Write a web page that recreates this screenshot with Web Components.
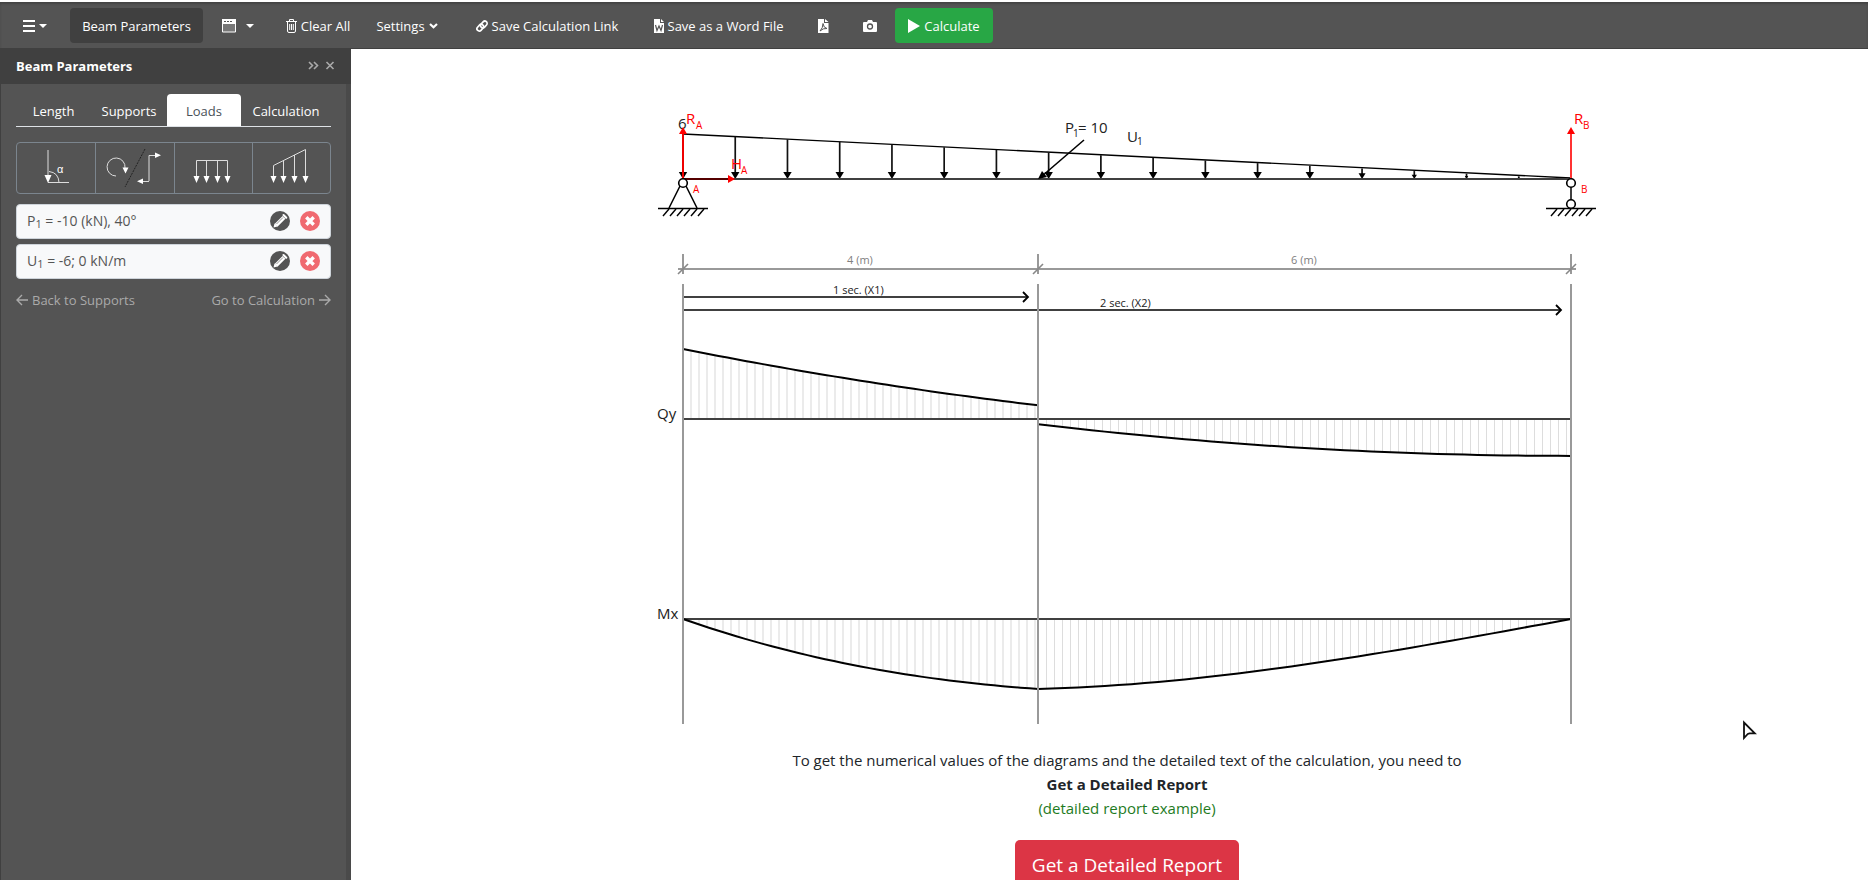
<!DOCTYPE html>
<html lang="en">
<head>
<meta charset="utf-8">
<title>Beam Calculator</title>
<style>
html,body{margin:0;height:100%}
body{overflow:hidden;background:#fff;color:#212529;font:13px/20px "Open Sans","Noto Sans",sans-serif}
</style>
</head>
<body>
<beam-app></beam-app>

<template id="t-app">
<style>
:host{display:flex;flex-direction:column;height:100vh;padding-top:2px;box-sizing:border-box}
.body{display:flex;flex:1;min-height:0}
main{flex:1;min-width:0;overflow:hidden;padding:51px 0 0 35px;display:flex;flex-direction:column;align-items:center}
beam-diagram{flex:none;width:940px;max-width:100%}
.pointer{position:absolute;left:1742px;top:720px}
</style>
<top-bar></top-bar>
<div class="body">
  <side-panel></side-panel>
  <main>
    <beam-diagram></beam-diagram>
    <report-prompt></report-prompt>
  </main>
</div>
<svg class="pointer" width="16" height="21" viewBox="0 0 16 21" aria-hidden="true"><path d="M2 2.500V18L5.800 14L7.500 13.300H12.800Z" fill="#fff" stroke="#111" stroke-width="1.800"/></svg>
</template>

<template id="t-bar">
<style>
:host{display:block;flex:none;background:#545454;border-bottom:1px solid #404040;box-shadow:inset 0 2px 2px #444}
nav{display:flex;align-items:center;height:46px;padding:1px 0 0 10px;box-sizing:border-box}
</style>
<nav aria-label="Tools">
  <bar-button style="--w:50px;--e:10px" label="Menu"><svg width="24" height="14" viewBox="0 0 24 14"><path d="M0 2h12M0 7h12M0 12h12" stroke="#fff" stroke-width="2"/><path d="M16 5h8l-4 4z" fill="#fff"/></svg></bar-button>
  <bar-button style="--w:133px;--bg:#404040">Beam Parameters</bar-button>
  <bar-button style="--w:69px" label="Windows"><svg width="32" height="14" viewBox="0 0 32 14"><path d="M.5 1h13v12H.5z" fill="#777" stroke="#fff"/><path d="M0 0h14v5H0z" fill="#fff"/><path d="M2 2h2v1H2zm3 0h2v1H5zm3 0h2v1H8z" fill="#555"/><path d="M24 5h8l-4 4z" fill="#fff"/></svg></bar-button>
  <bar-button style="--w:92px"><svg width="11" height="14" viewBox="0 0 11 14" fill="none" stroke="#fff"><path d="M0 2.500h11M3.500 2V.5h4V2M1.500 3v9q0 1.500 1.500 1.500h5q1.500 0 1.500-1.500V3M3.700 5v6M5.500 5v6M7.300 5v6"/></svg>Clear All</bar-button>
  <bar-button style="--w:86px">Settings<svg width="9" height="6" viewBox="0 0 9 6"><path d="M1 1l3.500 3.300L8 1" fill="none" stroke="#fff" stroke-width="2.200"/></svg></bar-button>
  <bar-button style="--w:194px"><svg width="12" height="12" viewBox="0 0 12 12" fill="none" stroke="#fff" stroke-width="1.700"><rect x="4" y="2.200" width="7.500" height="4.600" rx="2.300" transform="rotate(-48 7.800 4.400)"/><rect x=".4" y="5.400" width="7.500" height="4.600" rx="2.300" transform="rotate(-48 4.200 7.600)"/></svg>Save Calculation Link</bar-button>
  <bar-button style="--w:149px"><svg width="10" height="14" viewBox="0 0 10 14"><path d="M0 0h6v4h4v10H0zM7 0l3 3H7z" fill="#fff"/><path d="M1.500 6l1.500 5.500L5 7l2 4.500L8.500 6" fill="none" stroke="#545454" stroke-width="1.200"/></svg>Save as a Word File</bar-button>
  <bar-button style="--w:61px" label="Save as PDF"><svg width="11" height="14" viewBox="0 0 11 14"><path d="M0 0h6v4h4.500v10H0zM7 0l3.500 3H7z" fill="#fff"/><path d="M2 12q3-3 3-7.500Q5.500 9 9 9.500 5 9 2 12" fill="none" stroke="#545454"/></svg></bar-button>
  <bar-button style="--w:31px" label="Screenshot"><svg width="14" height="12" viewBox="0 0 14 12"><path d="M1 2h3l1-2h4l1 2h3q1 0 1 1v8q0 1-1 1H1q-1 0-1-1V3q0-1 1-1z" fill="#fff"/><circle cx="7" cy="6.500" r="2.500" fill="none" stroke="#545454" stroke-width="1.300"/></svg></bar-button>
  <bar-button style="--w:98px;--bg:#28a745;--m:10px"><svg width="12" height="14" viewBox="0 0 12 14"><path d="M0 0l12 7L0 14z" fill="#fff"/></svg>Calculate</bar-button>
</nav>
</template>

<template id="t-bb">
<style>
:host{display:block;flex:none;min-width:var(--w);margin-left:var(--m,0);margin-right:var(--e,0)}
button{display:flex;align-items:center;justify-content:center;gap:4px;width:100%;height:35px;padding:0;border:0;border-radius:4px;background:var(--bg,transparent);color:#fff;font:inherit;white-space:nowrap}
</style>
<button type="button"><slot></slot></button>
</template>

<template id="t-side">
<style>
:host{display:flex;flex-direction:column;flex:none;width:351px;background:#545454;box-sizing:border-box;border-right:5px solid #4a4a4a;border-left:1px solid #404040}
header{display:flex;align-items:center;gap:6px;height:35px;flex:none;box-sizing:border-box;padding:0 16px 2px 15px;margin:0 -5px 0 -1px;background:#404040;color:#fff}
h2{flex:1;margin:0;font-size:13px;line-height:20px;padding-left:1px}
header button{display:flex;border:0;padding:0;background:none}
.content{padding:10px 15px 0}
[role=tablist]{display:grid;grid-template-columns:75px 76px 74px 1fr;border-bottom:1px solid #dee2e6;height:32px}
[role=tab]{border:0;border-radius:4px 4px 0 0;background:none;color:#fff;font:inherit;padding:2px 0 0;height:32px}
[role=tab][aria-selected=true]{background:#fff;color:#495057}
.loads{display:grid;grid-template-columns:repeat(4,1fr);height:52px;box-sizing:border-box;border:1px solid #7b858e;border-radius:4px;margin:15px 0 10px}
.loads button{display:flex;align-items:center;justify-content:center;border:0;border-left:1px solid #7b858e;background:none;padding:0}
.loads button:first-child{border-left:0}
.loads svg{fill:none;stroke:#ddd}
.loads svg [f]{fill:#fff;stroke:none}
load-row{margin-bottom:5px}
footer{display:flex;justify-content:space-between;margin-top:11px}
a{display:flex;align-items:center;gap:4px;color:#aaa;text-decoration:none}
a svg{fill:none;stroke:#aaa;stroke-width:1.400}
</style>
<header><h2>Beam Parameters</h2>
  <button type="button" aria-label="Collapse"><svg width="11" height="9" viewBox="0 0 11 9"><path d="M1 1l3.500 3.500L1 8M6 1l3.500 3.500L6 8" fill="none" stroke="#aaa" stroke-width="1.600"/></svg></button>
  <button type="button" aria-label="Close"><svg width="10" height="9" viewBox="0 0 10 9"><path d="M1.500 1l7 7M8.500 1l-7 7" fill="none" stroke="#aaa" stroke-width="1.600"/></svg></button>
</header>
<div class="content">
  <div role="tablist">
    <button role="tab">Length</button><button role="tab">Supports</button><button role="tab" aria-selected="true">Loads</button><button role="tab">Calculation</button>
  </div>
  <div class="loads">
    <button type="button" aria-label="Force"><svg width="68" height="46" viewBox="0 0 68 46"><path d="M26 5v28M26 37.500h21M27 26.500q9.500 1 10 11"/><path f d="M22.500 30h7L26 38z"/><text f x="35" y="28" font-size="11">α</text></svg></button>
    <button type="button" aria-label="Moment"><svg width="68" height="46" viewBox="0 0 68 46"><path d="M15 31A9 9 0 1 1 24 23M48 36V10.500h6M48 36.500H41"/><path d="M44 4L24 42" stroke="#222" stroke-dasharray="2 1"/><path f d="M21.500 22.500h6l-3 6zM54 7.500l6 2.700-6 2.800zM42 33.500l-6 2.800 6 2.700z"/></svg></button>
    <button type="button" aria-label="Uniform load"><svg width="68" height="46" viewBox="0 0 68 46"><path d="M17.500 34V15.500h31V34M27.500 15v19M38.500 15v19"/><path f d="M14.500 31h6l-3 7zM24.500 31h6l-3 7zM35.500 31h6l-3 7zM45.500 31h6l-3 7z"/></svg></button>
    <button type="button" aria-label="Trapezoidal load"><svg width="68" height="46" viewBox="0 0 68 46"><path d="M16.500 34V20.500l32-16V34M26.500 16v18M37.500 10v24"/><path f d="M13.500 31h6l-3 7zM23.500 31h6l-3 7zM34.500 31h6l-3 7zM45.500 31h6l-3 7z"/></svg></button>
  </div>
  <load-row>P<sub>1</sub> = -10 (kN), 40°</load-row>
  <load-row>U<sub>1</sub> = -6; 0 kN/m</load-row>
  <footer>
    <a href="#supports"><svg width="12" height="12" viewBox="0 0 12 12"><path d="M12 6H1M6 1L1 6l5 5"/></svg>Back to Supports</a>
    <a href="#calculation">Go to Calculation<svg width="12" height="12" viewBox="0 0 12 12"><path d="M0 6h11M6 1l5 5-5 5"/></svg></a>
  </footer>
</div>
</template>

<template id="t-row">
<style>
:host{display:flex;align-items:center;gap:10px;height:35px;box-sizing:border-box;padding:0 10px 2px;border:1px solid #ced4da;border-radius:4px;background:#f8f9fa;color:#555;font-size:14px}
.t{flex:1}
::slotted(sub){font-size:11px;line-height:0;vertical-align:-2px}
button{display:flex;border:0;padding:0;background:none}
</style>
<span class="t"><slot></slot></span>
<button type="button" aria-label="Edit"><svg width="20" height="20" viewBox="0 0 20 20"><circle cx="10" cy="10" r="10" fill="#545454"/><path d="M6 14.300L14 6.300" stroke="#fff" stroke-width="4"/><path d="M3.500 16.500l1-4 3 3z" fill="#fff"/><path d="M13.500 4l2.800 2.800" stroke="#fff" stroke-width="2" stroke-linecap="round"/><path d="M6.500 13l6.500-6.500" stroke="#777" stroke-width=".8"/></svg></button>
<button type="button" aria-label="Delete"><svg width="20" height="20" viewBox="0 0 20 20"><circle cx="10" cy="10" r="10" fill="#f06a70"/><path d="M6.300 6.300l7.400 7.400M13.700 6.300l-7.400 7.400" stroke="#fff" stroke-width="3.400"/></svg></button>
</template>

<template id="t-diagram">
<style>
:host{display:block}
svg{display:block;width:100%;height:auto}
text{font:15px "Open Sans","Noto Sans",sans-serif;fill:#222}
.s{font-size:10px}
.d{font-size:11px;fill:#808080}
.x{font-size:11px}
.r{fill:#f00}
</style>
<svg viewBox="657 100 940 634" role="img" aria-label="Beam scheme with shear force and bending moment diagrams"></svg>
</template>

<template id="t-prompt">
<style>
:host{display:block;flex:none;margin-top:14px;text-align:center;font-size:15px;line-height:24px}
p{margin:0}
a{color:#1e7b1e;text-decoration:none}
button{margin-top:20px;width:224px;height:50px;border:0;border-radius:5px;background:#dc3545;color:#fff;font:19px/28px "Open Sans","Noto Sans",sans-serif}
</style>
<p>To get the numerical values of the diagrams and the detailed text of the calculation, you need to</p>
<p><b>Get a Detailed Report</b></p>
<p><a href="#example">(detailed report example)</a></p>
<button type="button">Get a Detailed Report</button>
</template>

<script>
const define = (name, id, init) => customElements.define(name, class extends HTMLElement {
  constructor() {
    super();
    this.attachShadow({ mode: 'open' }).append(document.getElementById(id).content.cloneNode(true));
  }
  connectedCallback() { if (init) init(this, this.shadowRoot); }
});

const line = (x1, y1, x2, y2, color = '#000', w = 2) =>
  `<path d="M${x1} ${y1}L${x2} ${y2}" stroke="${color}" stroke-width="${w}" fill="none"/>`;
const poly = (points, color = '#000') => `<path d="M${points}Z" fill="${color}"/>`;
const text = (x, y, s, cls = '') => `<text x="${x}" y="${y}" class="${cls}">${s}</text>`;

function drawBeam(svg) {
  const A = 683, P = 1038, B = 1571, Y = 179, grey = '#999', axis = '#404040';
  const xAt = m => A + (B - A) * m / 10;
  let o = '';

  // distributed load
  o += text(678, 129, '6');
  o += line(A, 134, B, Y - 1, '#000', 1.4);
  for (let k = 0; k < 17; k++) {
    const x = A + (B - A) * k / 17, h = 45 * (1 - k / 17), a = Math.min(7, h * .55);
    o += line(x, Y - h, x, Y - a / 2, '#111', 1.7);
    o += poly(`${x - a * .6} ${Y - a}h${a * 1.2}L${x} ${Y}`);
  }
  o += line(A, Y, B, Y, axis);

  // reactions
  o += line(A, 134, A, Y, '#e00') + poly('679 134h8L683 127', '#f00');
  o += line(A, Y, 728, Y, '#500') + poly('728 175v8L735 179', '#f00');
  o += line(B, 134, B, Y, '#f33') + poly('1567 134h8L1571 127', '#f00');
  o += text(686, 124, 'R', 'r') + text(696, 129, 'A', 'r s');
  o += text(731, 169, 'H', 'r') + text(741, 174, 'A', 'r s') + text(693, 193, 'A', 'r s');
  o += text(1574, 124, 'R', 'r') + text(1583, 129, 'B', 'r s') + text(1581, 193, 'B', 'r s');

  // point force
  o += line(1084, 140, 1041, 177, '#000', 1.6) + poly('1038 179L1042 171L1047 177');
  o += text(1065, 133, 'P') + text(1073, 137, '1', 's') + text(1078, 133, '= 10');
  o += text(1127, 142, 'U') + text(1137, 145, '1', 's');

  // supports
  const circle = (x, y) => `<circle cx="${x}" cy="${y}" r="4.300" fill="#fff" stroke="#000" stroke-width="1.600"/>`;
  const ground = x => {
    let g = line(x - 25, 208.5, x + 25, 208.5, '#000', 1.4);
    for (let i = 0; i < 6; i++) g += line(x - 14 + i * 7, 209, x - 20 + i * 7, 216, '#000', 1.4);
    return g;
  };
  o += ground(A) + line(680, 186, 669, 208, '#000', 1.5) + line(686, 186, 697, 208, '#000', 1.5) + circle(A, 183);
  o += ground(B) + line(B, 187, B, 200, axis) + circle(B, 183) + circle(B, 204);

  // dimensions
  o += line(678, 269, 1576, 269, grey);
  for (const x of [A, P, B]) o += line(x, 254, x, 274, grey) + line(x - 5, 274, x + 5, 264, '#888', 1.6);
  o += text(847, 264, '4 (m)', 'd') + text(1291, 264, '6 (m)', 'd');

  // sections
  const section = (y, x2) => line(A, y, x2, y, axis) +
    `<path d="M${x2 - 5} ${y - 5}l5 5l-5 5" fill="none" stroke="#000" stroke-width="1.800"/>`;
  o += section(297, 1028) + section(310, 1561);
  o += text(833, 294, '1 sec. (X1)', 'x') + text(1100, 307, '2 sec. (X2)', 'x');

  // shear force and bending moment
  const R = 23.857, V = 6.428;
  const shear = after => m => 419 - 2.934 * (R - 6 * m + .3 * m * m - (after ? V : 0));
  const moment = m => 619 + 1.3 * (R * m - 3 * m * m + .1 * m ** 3 - V * Math.max(0, m - 4));
  const plot = (f, from, to, base) => {
    const x0 = Math.round(xAt(from)), x1 = Math.round(xAt(to)), thin = from > 0;
    let g = '', pts = [];
    for (let x = x0 + 8; x < x1; x += 8) {
      const px = thin ? x + .5 : x;
      g += line(px, base, px, f((x - A) / 88.8), thin ? '#ddd' : '#ebebeb', thin ? 1 : 2);
    }
    g += line(x0, base, x1, base, axis);
    for (let i = 0; i <= 40; i++) { const m = from + (to - from) * i / 40; pts.push(xAt(m) + ' ' + f(m)); }
    return g + `<path d="M${pts.join('L')}" fill="none" stroke="#000" stroke-width="2"/>`;
  };
  o += plot(shear(false), 0, 4, 419) + plot(shear(true), 4, 10, 419);
  o += plot(moment, 0, 4, 619) + plot(moment, 4, 10, 619);
  for (const x of [A, P, B]) o += line(x, 284, x, 724, grey);
  o += text(657, 419, 'Qy') + text(657, 619, 'Mx');
  svg.innerHTML = o;
}

define('bar-button', 't-bb', (el, root) => {
  if (el.hasAttribute('label')) root.querySelector('button').setAttribute('aria-label', el.getAttribute('label'));
});
define('load-row', 't-row');
define('top-bar', 't-bar');
define('side-panel', 't-side');
define('beam-diagram', 't-diagram', (el, root) => drawBeam(root.querySelector('svg')));
define('report-prompt', 't-prompt');
define('beam-app', 't-app');
</script>
</body>
</html>
